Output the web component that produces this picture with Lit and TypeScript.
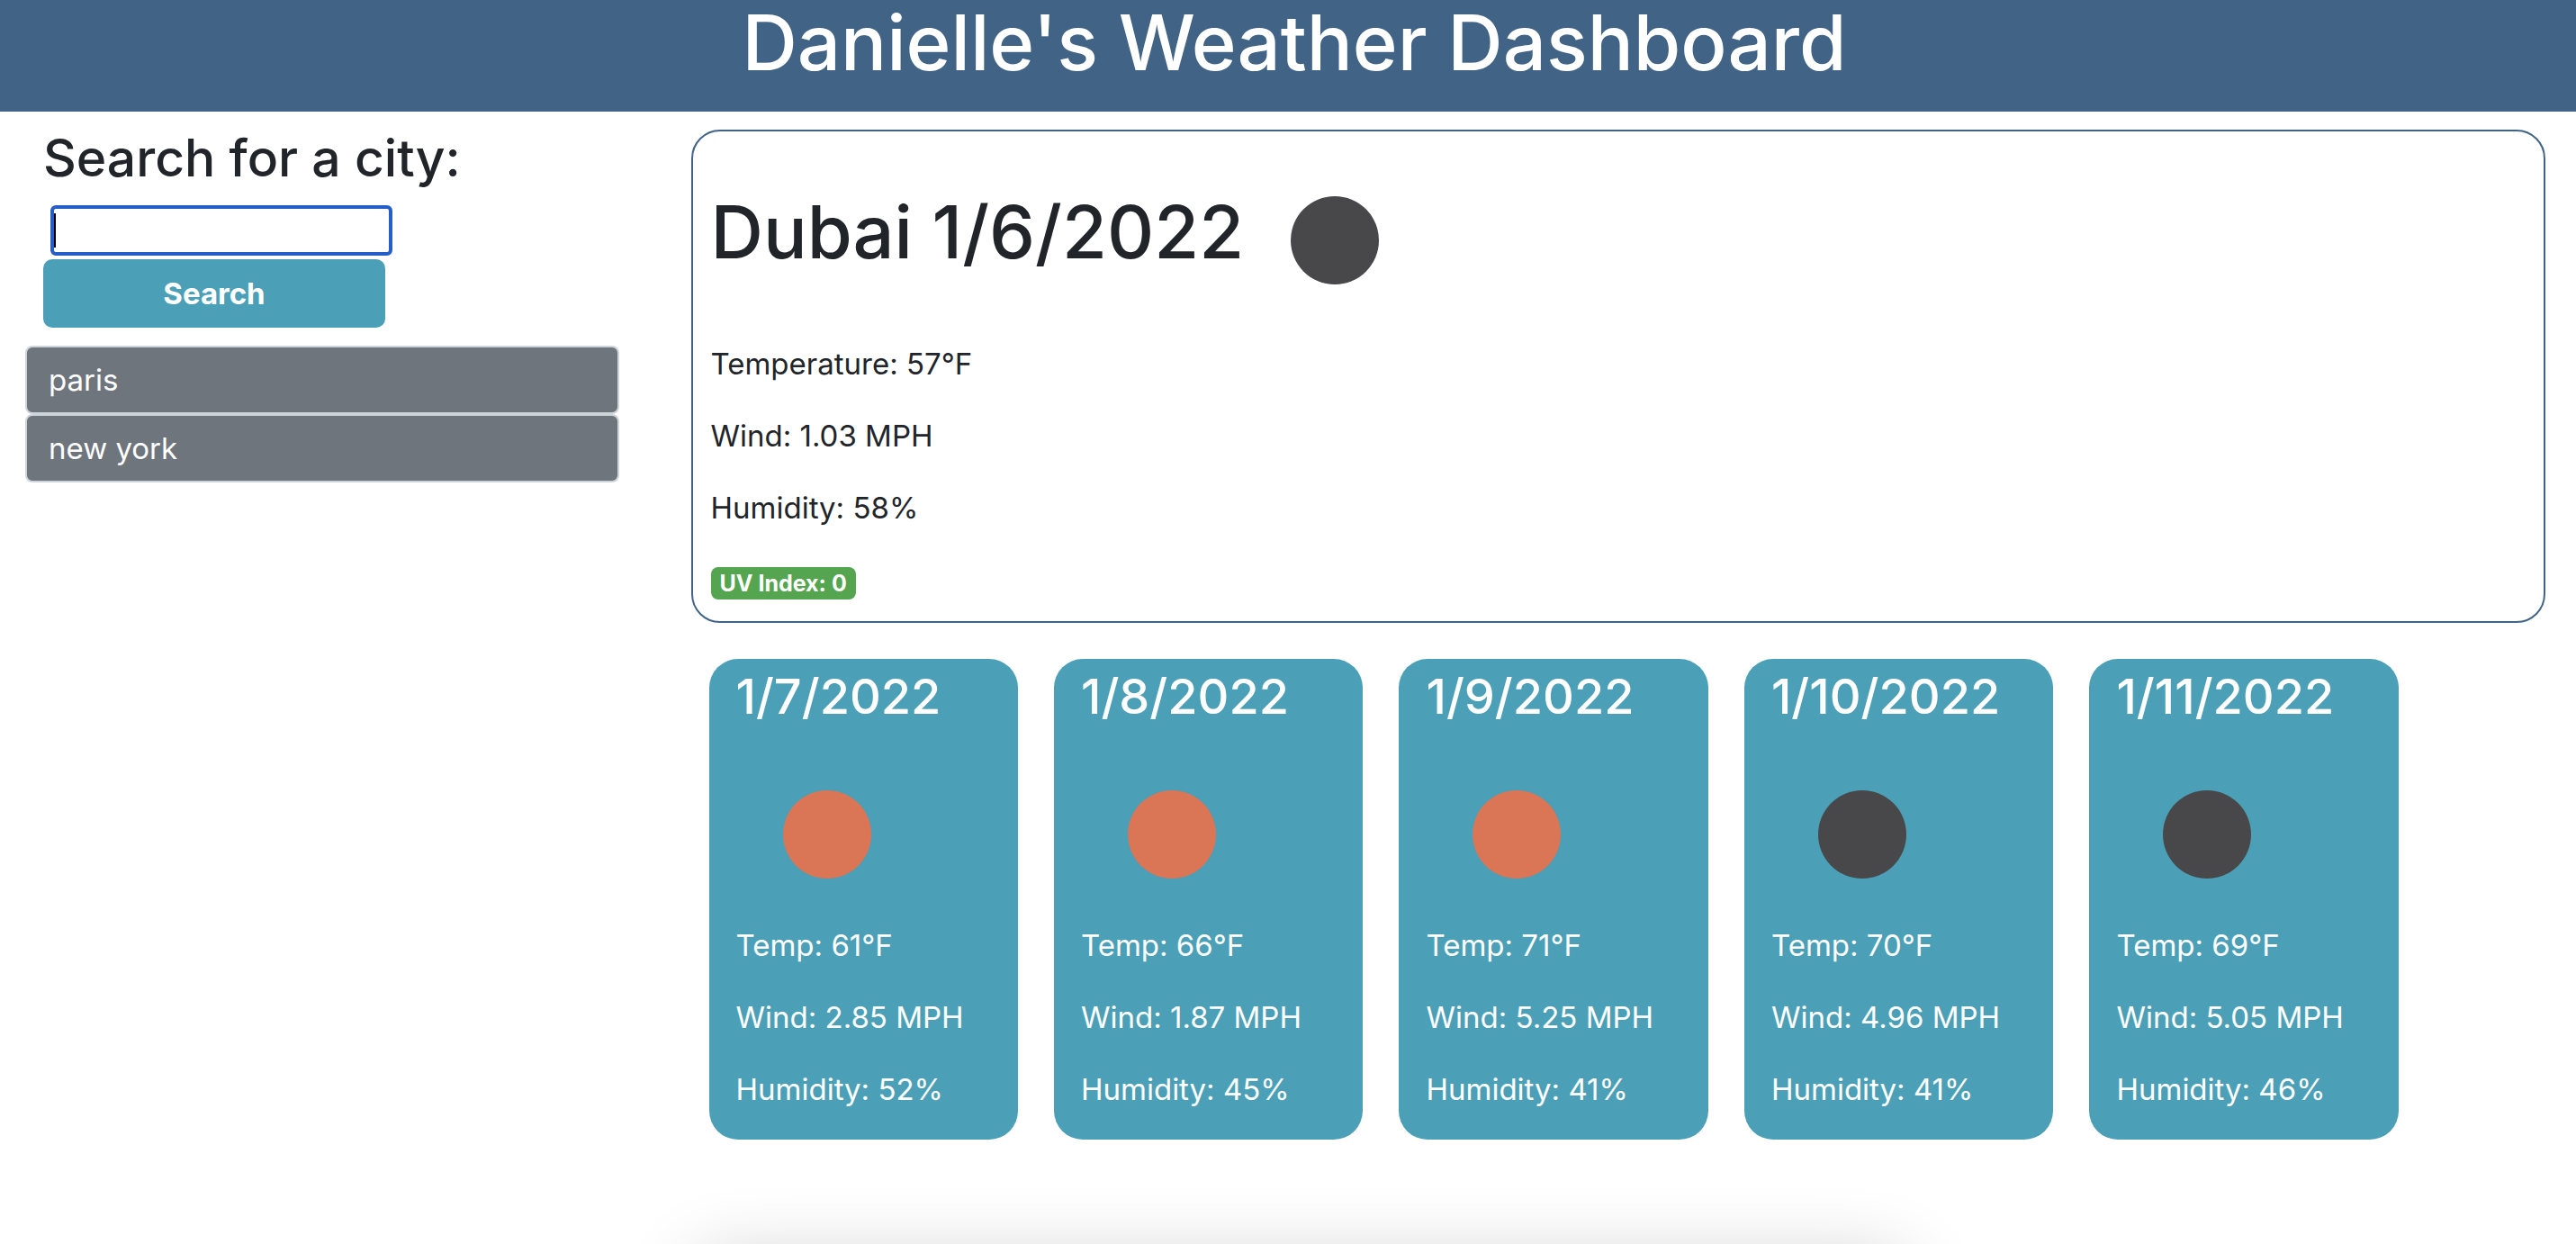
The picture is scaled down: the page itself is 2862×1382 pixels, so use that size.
import { LitElement, html, css, svg } from "lit";
import { customElement, property, state } from "lit/decorators.js";

type Sky = "clear-day" | "clear-night";

interface Forecast {
  date: string;
  sky: Sky;
  temp: number;
  wind: number;
  humidity: number;
}

const FORECAST: Forecast[] = [
  { date: "1/7/2022", sky: "clear-day", temp: 61, wind: 2.85, humidity: 52 },
  { date: "1/8/2022", sky: "clear-day", temp: 66, wind: 1.87, humidity: 45 },
  { date: "1/9/2022", sky: "clear-day", temp: 71, wind: 5.25, humidity: 41 },
  { date: "1/10/2022", sky: "clear-night", temp: 70, wind: 4.96, humidity: 41 },
  { date: "1/11/2022", sky: "clear-night", temp: 69, wind: 5.05, humidity: 46 },
];

@customElement("sky-icon")
export class SkyIcon extends LitElement {
  @property() sky: Sky = "clear-day";

  static styles = css`
    :host {
      display: block;
      flex: none;
      width: 200px;
      height: 200px;
    }
    .icon {
      display: block;
      width: 100%;
      height: 100%;
    }
    .clear-day {
      fill: #da7556;
    }
    .clear-night {
      fill: #48484a;
    }
  `;

  render() {
    return html`<svg class="icon" viewBox="0 0 200 200" aria-hidden="true">
      ${svg`<circle class=${this.sky} cx="101" cy="101" r="49" />`}
    </svg>`;
  }
}

@customElement("forecast-card")
export class ForecastCard extends LitElement {
  @property({ attribute: false }) day!: Forecast;

  static styles = css`
    :host {
      display: block;
      box-sizing: border-box;
      padding: 8px 0 32px 30px;
      border-radius: 32px;
      background: #4b9fb6;
      color: #fff;
    }
    .date {
      margin: 0 0 18px;
      font-size: 54px;
      line-height: 68px;
      font-weight: 500;
    }
    .reading {
      margin: 0 0 32px;
      line-height: 48px;
      white-space: nowrap;
    }
    .reading:last-child {
      margin-bottom: 0;
    }
  `;

  render() {
    const d = this.day;
    return html`
      <h2 class="date">${d.date}</h2>
      <sky-icon .sky=${d.sky}></sky-icon>
      <p class="reading">Temp: ${d.temp}°F</p>
      <p class="reading">Wind: ${d.wind} MPH</p>
      <p class="reading">Humidity: ${d.humidity}%</p>
    `;
  }
}

@customElement("app-root")
export class AppRoot extends LitElement {
  @state() private history = ["paris", "new york"];

  static styles = css`
    :host {
      display: block;
      position: relative;
      box-sizing: border-box;
      min-height: 100vh;
      background: #fff;
      color: #212529;
      font-family: Inter, "Open Sans", sans-serif;
      font-size: 33px;
      line-height: 48px;
    }
    .banner {
      padding: 0 0 28px 14px;
      background: #406386;
      color: #fff;
      text-align: center;
    }
    .title {
      margin: 0;
      font-size: 85px;
      line-height: 96px;
      font-weight: 500;
    }
    .layout {
      display: grid;
      grid-template-columns: 1fr 3fr;
    }
    .sidebar {
      padding: 18px 28px 0;
    }
    .search {
      display: flex;
      flex-direction: column;
      align-items: flex-start;
      margin: 0 20px 20px;
    }
    .search-label {
      margin-bottom: 18px;
      font-size: 57px;
      line-height: 68px;
      font-weight: 500;
      white-space: nowrap;
    }
    .city {
      box-sizing: border-box;
      width: 380px;
      height: 56px;
      margin: 0 0 4px 8px;
      padding: 0 4px;
      border: 4px solid #255ec8;
      border-radius: 6px;
      outline: none;
      background: linear-gradient(#000, #000) 0 center / 2px 38px no-repeat #fff;
      font: inherit;
      color: inherit;
    }
    .city:not(:placeholder-shown) {
      background: #fff;
    }
    .submit {
      width: 380px;
      padding: 14px 0;
      border: 0;
      border-radius: 10px;
      background: #4b9fb6;
      color: #fff;
      font: inherit;
      font-weight: 700;
      cursor: pointer;
    }
    .history {
      margin: 0;
      padding: 0;
      list-style: none;
    }
    .past {
      display: block;
      box-sizing: border-box;
      width: 100%;
      padding: 12px 24px;
      border: 2px solid #ced4da;
      border-radius: 8px;
      background: #6e757d;
      color: #fff;
      font: inherit;
      text-align: left;
      cursor: pointer;
    }
    .content {
      min-width: 0;
      padding: 20px 34px 0 52px;
    }
    .current {
      padding: 20px 20px 24px;
      border: 2px solid #406386;
      border-radius: 32px;
    }
    .place {
      display: flex;
      align-items: center;
      margin: 0 0 14px;
      font-size: 81px;
      line-height: 96px;
      font-weight: 500;
    }
    .place-name {
      padding-bottom: 16px;
    }
    .reading {
      margin: 0 0 32px;
    }
    .badge {
      display: block;
      width: fit-content;
      margin-top: 42px;
      padding: 4px 10px;
      border-radius: 8px;
      background: #55a550;
      color: #fff;
      font-size: 25px;
      line-height: 28px;
      font-weight: 700;
    }
    .days {
      display: flex;
      gap: 40px;
      padding: 40px 20px;
    }
    .day {
      flex: 0 0 17%;
    }
    .edge {
      position: absolute;
      left: 0;
      right: 0;
      bottom: 0;
      height: 100px;
      overflow: hidden;
      pointer-events: none;
    }
    .edge-shadow {
      height: 200px;
      margin: 118px 26% 0 27%;
      border-radius: 20px;
      box-shadow: 0 0 84px rgba(0, 0, 0, 0.2);
    }
  `;

  private onSubmit(event: Event) {
    event.preventDefault();
    const field = this.renderRoot.querySelector<HTMLInputElement>(".city");
    const city = field?.value.trim();
    if (field && city) {
      this.history = [...this.history, city];
      field.value = "";
    }
  }

  render() {
    return html`
      <header class="banner">
        <h1 class="title">Danielle's Weather Dashboard</h1>
      </header>
      <div class="layout">
        <aside class="sidebar">
          <form class="search" @submit=${this.onSubmit}>
            <label class="search-label" for="city">Search for a city:</label>
            <input class="city" id="city" type="text" placeholder=" " autocomplete="off" />
            <button class="submit" type="submit">Search</button>
          </form>
          <ul class="history">
            ${this.history.map(
              (city) => html`<li><button class="past" type="button">${city}</button></li>`
            )}
          </ul>
        </aside>
        <main class="content">
          <section class="current">
            <h2 class="place">
              <span class="place-name">Dubai 1/6/2022</span>
              <sky-icon sky="clear-night"></sky-icon>
            </h2>
            <p class="reading">Temperature: 57°F</p>
            <p class="reading">Wind: 1.03 MPH</p>
            <p class="reading">Humidity: 58%</p>
            <span class="badge">UV Index: 0</span>
          </section>
          <section class="days">
            ${FORECAST.map((d) => html`<forecast-card class="day" .day=${d}></forecast-card>`)}
          </section>
        </main>
      </div>
      <div class="edge"><div class="edge-shadow"></div></div>
    `;
  }
}
